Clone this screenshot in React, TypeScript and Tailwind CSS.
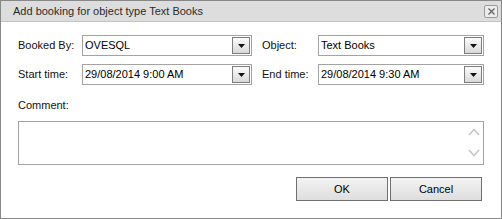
import React from "react";

const font = { fontFamily: '"Liberation Sans", Arial, sans-serif' };

function ArrowButton() {
  return (
    <div className="flex h-[17px] w-[18px] items-center justify-center border border-[#7d7d7d] bg-gradient-to-b from-[#fbfbfb] to-[#d9d9d9]">
      <svg width="7" height="4" viewBox="0 0 7 4">
        <path d="M0 0h7L3.5 4z" fill="#111" />
      </svg>
    </div>
  );
}

function ComboBox({ value, width }: { value: string; width: string }) {
  return (
    <div
      className={`flex h-[21px] items-center border border-[#a3a3a3] bg-white pl-[2px] pr-[1px] ${width}`}
    >
      <span className="flex-1 truncate text-[11px] text-black">{value}</span>
      <ArrowButton />
    </div>
  );
}

function Field({
  label,
  value,
  labelWidth,
  boxWidth,
}: {
  label: string;
  value: string;
  labelWidth: string;
  boxWidth: string;
}) {
  return (
    <div className="flex items-center">
      <span className={`text-[11px] text-[#111] ${labelWidth}`}>{label}</span>
      <ComboBox value={value} width={boxWidth} />
    </div>
  );
}

export default function App() {
  return (
    <div
      style={font}
      className="flex h-[219px] w-[502px] flex-col border border-[#888] bg-white"
    >
      <div className="flex h-[21px] items-center justify-between border-b border-[#c4c4c4] bg-[#dddddd] pl-[12px] pr-[3px]">
        <span className="text-[11px] text-[#2a2a2a]">
          Add booking for object type Text Books
        </span>
        <div className="flex h-[13px] w-[14px] items-center justify-center rounded-[2px] border border-[#9a9a9a] bg-[#ececec]">
          <svg width="7" height="7" viewBox="0 0 7 7">
            <path d="M0.5 0.5l6 6M6.5 0.5l-6 6" stroke="#666" strokeWidth="1.4" />
          </svg>
        </div>
      </div>

      <div className="flex flex-col px-[17px]">
        <div className="mt-[13px] flex">
          <Field label="Booked By:" value="OVESQL" labelWidth="w-[64px]" boxWidth="w-[170px]" />
          <div className="ml-[10px]">
            <Field label="Object:" value="Text Books" labelWidth="w-[56px]" boxWidth="w-[166px]" />
          </div>
        </div>
        <div className="mt-[8px] flex">
          <Field
            label="Start time:"
            value="29/08/2014 9:00 AM"
            labelWidth="w-[64px]"
            boxWidth="w-[170px]"
          />
          <div className="ml-[10px]">
            <Field
              label="End time:"
              value="29/08/2014 9:30 AM"
              labelWidth="w-[56px]"
              boxWidth="w-[166px]"
            />
          </div>
        </div>

        <div className="mt-[13px] h-[14px] text-[11px] leading-[14px] text-[#111]">Comment:</div>
        <div className="mt-[9px] flex h-[44px] border border-[#a3a3a3] bg-white">
          <div className="flex-1" />
          <div className="flex w-[18px] flex-col items-center justify-between pt-[6px] pb-[7px]">
            <svg width="12" height="8" viewBox="0 0 12 8">
              <path d="M1 7l5-5.5L11 7" stroke="#c6c6c6" strokeWidth="1.6" fill="none" />
            </svg>
            <svg width="12" height="8" viewBox="0 0 12 8">
              <path d="M1 1l5 5.5L11 1" stroke="#c6c6c6" strokeWidth="1.6" fill="none" />
            </svg>
          </div>
        </div>

        <div className="mt-[12px] mr-[2px] flex justify-end gap-[2px]">
          <button className="h-[24px] w-[92px] border border-[#707070] bg-gradient-to-b from-[#f3f3f3] to-[#dedede] text-[11px] text-black">
            OK
          </button>
          <button className="h-[24px] w-[92px] border border-[#707070] bg-gradient-to-b from-[#f3f3f3] to-[#dedede] text-[11px] text-black">
            Cancel
          </button>
        </div>
      </div>
    </div>
  );
}
